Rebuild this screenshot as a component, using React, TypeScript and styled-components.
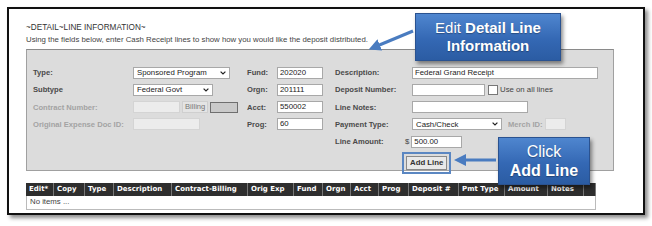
import React from "react";
import styled, { createGlobalStyle } from "styled-components";

const GlobalStyle = createGlobalStyle`
  html, body {
    margin: 0;
    padding: 0;
    background: #ffffff;
  }
  body {
    font-family: "Liberation Sans", Arial, sans-serif;
  }
`;

const Page = styled.div`
  width: 652px;
  height: 226px;
  padding: 7px 0 0 7px;
  box-sizing: border-box;
  position: relative;
`;

const Frame = styled.div`
  width: 638px;
  height: 208px;
  box-sizing: border-box;
  border: 2px solid #111;
  background: #fff;
  box-shadow: 3px 3px 4px rgba(0, 0, 0, 0.45);
  padding: 13px 0 0 17px;
  display: flex;
  flex-direction: column;
`;

const Title = styled.div`
  font-size: 8.2px;
  color: #333;
  line-height: 11px;
`;

const Subtitle = styled.div`
  font-size: 7.8px;
  color: #444;
  line-height: 11px;
  margin-top: 1px;
`;

const Panel = styled.div`
  margin-top: 4px;
  width: 588px;
  height: 122px;
  box-sizing: border-box;
  background: #dcdcdc;
  border: 1px solid #a0a0a0;
  border-top-color: #8a8a8a;
  padding: 16px 0 0 6px;
  display: flex;
  flex-direction: column;
`;

const FormGrid = styled.div`
  display: grid;
  grid-template-columns: 100px 114px 30px 58px 77px 1fr;
  grid-auto-rows: 13px;
  row-gap: 4.3px;
  align-items: center;
`;

const Label = styled.span<{ $muted?: boolean }>`
  font-size: 7.6px;
  font-weight: bold;
  color: ${(p) => (p.$muted ? "#a3a3a3" : "#4a4a4a")};
  white-space: nowrap;
`;

const Cell = styled.div`
  display: flex;
  align-items: center;
  gap: 2px;
  height: 13px;
`;

const Input = styled.div<{ $w: number; $disabled?: boolean }>`
  width: ${(p) => p.$w}px;
  height: 12px;
  box-sizing: border-box;
  background: ${(p) => (p.$disabled ? "#ececec" : "#ffffff")};
  border: 1px solid ${(p) => (p.$disabled ? "#d4d4d4" : "#a8a8a8")};
  font-size: 7.8px;
  color: #222;
  padding: 0 2px;
  line-height: 10px;
  white-space: nowrap;
  overflow: hidden;
`;

const Select = styled.div<{ $w: number }>`
  width: ${(p) => p.$w}px;
  height: 12px;
  box-sizing: border-box;
  background: #fff;
  border: 1px solid #a8a8a8;
  font-size: 7.8px;
  color: #222;
  padding: 0 3px;
  display: flex;
  align-items: center;
  justify-content: space-between;
`;

const Chevron = () => (
  <svg width="6" height="4" viewBox="0 0 6 4">
    <path d="M0.6 0.6 L3 3 L5.4 0.6" fill="none" stroke="#222" strokeWidth="1.2" />
  </svg>
);

const BillingTag = styled.span`
  font-size: 7.6px;
  color: #777;
  background: #e4e4e4;
  border: 1px solid #cfcfcf;
  padding: 0 2px;
  line-height: 10px;
`;

const BillingBox = styled.div`
  width: 28px;
  height: 11px;
  box-sizing: border-box;
  background: #cacaca;
  border: 1px solid #6f6f6f;
`;

const Check = styled.div`
  width: 8px;
  height: 8px;
  border: 1px solid #777;
  background: #fff;
  margin-left: 1px;
`;

const SmallText = styled.span`
  font-size: 7.8px;
  color: #444;
`;

const AmountCell = styled(Cell)`
  margin-left: -7px;
`;

const ButtonRow = styled.div`
  margin: 8px 0 0 373px;
  display: flex;
`;

const AddButton = styled.div`
  font-size: 7.8px;
  font-weight: bold;
  color: #333;
  background: #e9e9e9;
  border: 1px solid #8a8a8a;
  padding: 1px 3px;
  line-height: 10px;
  outline: 2px solid #5b87c2;
  outline-offset: 2px;
`;

const Table = styled.div`
  margin-top: 12px;
  width: 570px;
  display: flex;
  flex-direction: column;
`;

const HeaderRow = styled.div`
  display: flex;
  height: 13px;
  background: #2e2e2e;
`;

const HeadCell = styled.div<{ $w: number }>`
  width: ${(p) => p.$w}px;
  box-sizing: border-box;
  border-right: 1px solid #777;
  color: #fff;
  font-family: "DejaVu Sans", Verdana, sans-serif;
  font-weight: bold;
  font-size: 7px;
  line-height: 13px;
  padding-left: 3px;
  white-space: nowrap;
  overflow: hidden;
`;

const BodyRow = styled.div`
  height: 13px;
  border: 1px solid #bbb;
  border-top: none;
  font-size: 7.8px;
  color: #444;
  line-height: 12px;
  padding-left: 3px;
`;

const Callout = styled.div<{ $w: number; $h: number }>`
  position: absolute;
  width: ${(p) => p.$w}px;
  height: ${(p) => p.$h}px;
  box-sizing: border-box;
  background: linear-gradient(#4f86cf, #3468b4 55%, #2b5ca3);
  border: 1px solid #2a5290;
  box-shadow: 2px 3px 4px rgba(0, 0, 0, 0.45);
  color: #fff;
  font-family: "Liberation Sans", Arial, sans-serif;
  text-align: center;
  display: flex;
  flex-direction: column;
  justify-content: center;
  text-shadow: 0 1px 1px rgba(0, 0, 0, 0.3);
`;

const CalloutLine = styled.div<{ $size: number }>`
  font-size: ${(p) => p.$size}px;
  line-height: ${(p) => p.$size + 3}px;
`;

const Overlay = styled.svg`
  position: absolute;
  left: 0;
  top: 0;
  pointer-events: none;
`;

const columns: [string, number][] = [
  ["Edit*", 28],
  ["Copy", 31],
  ["Type", 29],
  ["Description", 58],
  ["Contract-Billing", 76],
  ["Orig Exp", 46],
  ["Fund", 29],
  ["Orgn", 28],
  ["Acct", 28],
  ["Prog", 30],
  ["Deposit #", 50],
  ["Pmt Type", 46],
  ["Amount", 43],
  ["Notes", 36],
  ["", 12],
];

export default function App() {
  return (
    <>
      <GlobalStyle />
      <Page>
        <Frame>
          <Title>~DETAIL~LINE INFORMATION~</Title>
          <Subtitle>
            Using the fields below, enter Cash Receipt lines to show how you would like the deposit distributed.
          </Subtitle>
          <Panel>
            <FormGrid>
              <Label>Type:</Label>
              <Cell>
                <Select $w={97}>
                  Sponsored Program <Chevron />
                </Select>
              </Cell>
              <Label>Fund:</Label>
              <Cell>
                <Input $w={46}>202020</Input>
              </Cell>
              <Label>Description:</Label>
              <Cell>
                <Input $w={186}>Federal Grand Receipt</Input>
              </Cell>

              <Label>Subtype</Label>
              <Cell>
                <Select $w={80}>
                  Federal Govt <Chevron />
                </Select>
              </Cell>
              <Label>Orgn:</Label>
              <Cell>
                <Input $w={46}>201111</Input>
              </Cell>
              <Label>Deposit Number:</Label>
              <Cell>
                <Input $w={73} />
                <Check />
                <SmallText>Use on all lines</SmallText>
              </Cell>

              <Label $muted>Contract Number:</Label>
              <Cell>
                <Input $w={47} $disabled />
                <BillingTag>Billing</BillingTag>
                <BillingBox />
              </Cell>
              <Label>Acct:</Label>
              <Cell>
                <Input $w={46}>550002</Input>
              </Cell>
              <Label>Line Notes:</Label>
              <Cell>
                <Input $w={116} />
              </Cell>

              <Label $muted>Original Expense Doc ID:</Label>
              <Cell>
                <Input $w={67} $disabled />
              </Cell>
              <Label>Prog:</Label>
              <Cell>
                <Input $w={46}>60</Input>
              </Cell>
              <Label>Payment Type:</Label>
              <Cell>
                <Select $w={90}>
                  Cash/Check <Chevron />
                </Select>
                <Label $muted style={{ marginLeft: 4 }}>
                  Merch ID:
                </Label>
                <Input $w={21} $disabled />
              </Cell>

              <span />
              <span />
              <span />
              <span />
              <Label>Line Amount:</Label>
              <AmountCell>
                <SmallText>$</SmallText>
                <Input $w={51}>500.00</Input>
              </AmountCell>
            </FormGrid>
            <ButtonRow>
              <AddButton>Add Line</AddButton>
            </ButtonRow>
          </Panel>
          <Table>
            <HeaderRow>
              {columns.map(([name, w], i) => (
                <HeadCell key={i} $w={w}>
                  {name}
                </HeadCell>
              ))}
            </HeaderRow>
            <BodyRow>No items ...</BodyRow>
          </Table>
        </Frame>

        <Overlay width="652" height="226" viewBox="0 0 652 226">
          <defs>
            <marker id="head" markerWidth="4" markerHeight="4" refX="1" refY="2" orient="auto">
              <path d="M0 0 L4 2 L0 4 Z" fill="#4a7cc0" />
            </marker>
          </defs>
          <line x1="413" y1="31" x2="377" y2="46" stroke="#4a7cc0" strokeWidth="3" markerEnd="url(#head)" />
          <line x1="496" y1="160" x2="463" y2="160" stroke="#4a7cc0" strokeWidth="3" markerEnd="url(#head)" />
        </Overlay>

        <Callout $w={146} $h={48} style={{ left: 415, top: 13 }}>
          <CalloutLine $size={15}>
            Edit <b>Detail Line</b>
          </CalloutLine>
          <CalloutLine $size={15}>
            <b>Information</b>
          </CalloutLine>
        </Callout>
        <Callout $w={92} $h={48} style={{ left: 498, top: 137 }}>
          <CalloutLine $size={16}>Click</CalloutLine>
          <CalloutLine $size={16}>
            <b>Add Line</b>
          </CalloutLine>
        </Callout>
      </Page>
    </>
  );
}
